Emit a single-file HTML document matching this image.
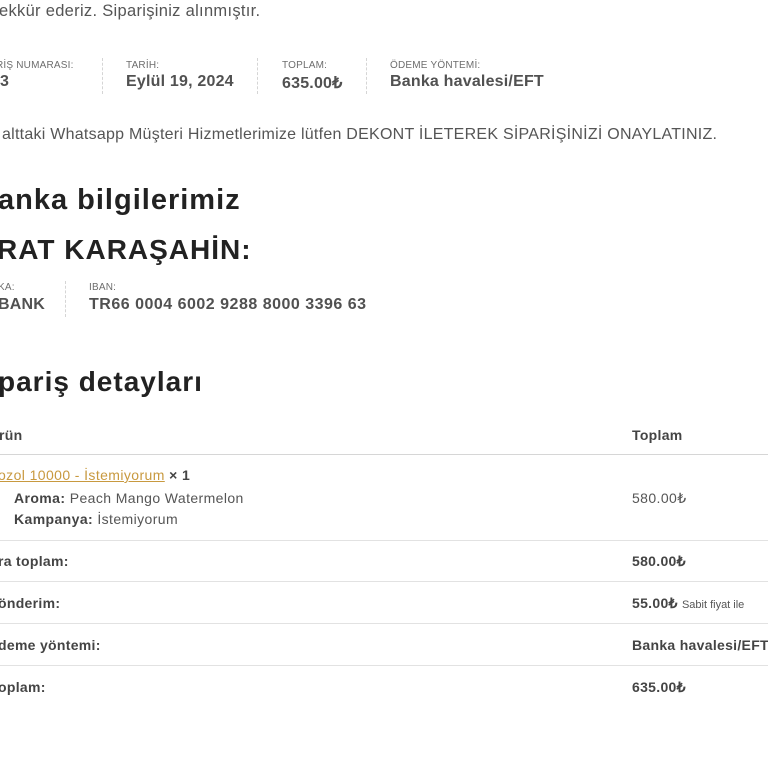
<!DOCTYPE html><html><head><meta charset="utf-8"><style>
body{margin:0;width:768px;height:768px;overflow:hidden;background:#fff;font-family:"Liberation Sans",sans-serif;color:#515151;position:relative}
div,span{position:absolute;white-space:nowrap}
.l{font-size:10px;text-transform:uppercase;color:#6d6d6d;letter-spacing:.2px}
.v{font-size:16px;font-weight:bold;color:#515151;letter-spacing:.2px}
.sep{width:0;border-left:1px dashed #d5d5d5}
.h{font-weight:bold;color:#222;letter-spacing:1px}
.hr{left:0;width:768px;height:1px;background:#e2e2e2}
.t{font-size:14px;font-weight:bold;color:#444;letter-spacing:.3px}
.n{font-size:14px;color:#555;letter-spacing:.4px}
</style></head><body>
<div style="left:-1px;top:2px;font-size:16.5px;color:#555;letter-spacing:.3px">ekkür ederiz. Siparişiniz alınmıştır.</div>
<div class="l" style="left:-4px;top:60px">RİŞ NUMARASI:</div>
<div class="v" style="left:0;top:73px">3</div>
<div class="sep" style="left:102px;top:58px;height:36px"></div>
<div class="l" style="left:126px;top:60px">TARİH:</div>
<div class="v" style="left:126px;top:73px">Eylül 19, 2024</div>
<div class="sep" style="left:257px;top:58px;height:36px"></div>
<div class="l" style="left:282px;top:60px">TOPLAM:</div>
<div class="v" style="left:282px;top:73px">635.00₺</div>
<div class="sep" style="left:366px;top:58px;height:36px"></div>
<div class="l" style="left:390px;top:60px">ÖDEME YÖNTEMİ:</div>
<div class="v" style="left:390px;top:73px">Banka havalesi/EFT</div>
<div style="left:2px;top:126px;font-size:16px;color:#555;letter-spacing:.25px">alttaki Whatsapp Müşteri Hizmetlerimize lütfen DEKONT İLETEREK SİPARİŞİNİZİ ONAYLATINIZ.</div>
<div class="h" style="left:-2px;top:184px;font-size:29px">anka bilgilerimiz</div>
<div class="h" style="left:-3px;top:234px;font-size:28px">RAT KARAŞAHİN:</div>
<div class="l" style="left:-2px;top:282px">KA:</div>
<div class="v" style="left:-2px;top:296px">BANK</div>
<div class="sep" style="left:65px;top:281px;height:36px"></div>
<div class="l" style="left:89px;top:282px">IBAN:</div>
<div class="v" style="left:89px;top:296px;letter-spacing:.5px">TR66 0004 6002 9288 8000 3396 63</div>
<div class="h" style="left:-2px;top:366px;font-size:28px">pariş detayları</div>
<div class="t" style="left:-1px;top:427px">rün</div>
<div class="t" style="left:632px;top:427px">Toplam</div>
<div class="hr" style="top:454px;background:#d6d6d6"></div>
<div class="n" style="left:-2px;top:467px"><span style="position:static;color:#c8993f;text-decoration:underline">ozol 10000 - İstemiyorum</span> <b style="color:#444">× 1</b></div>
<div class="n" style="left:14px;top:490px"><b style="color:#444">Aroma:</b> Peach Mango Watermelon</div>
<div class="n" style="left:14px;top:511px"><b style="color:#444">Kampanya:</b> İstemiyorum</div>
<div class="n" style="left:632px;top:490px">580.00₺</div>
<div class="hr" style="top:540px"></div>
<div class="t" style="left:-2px;top:553px">ra toplam:</div>
<div class="t" style="left:632px;top:553px">580.00₺</div>
<div class="hr" style="top:581px"></div>
<div class="t" style="left:-2px;top:595px">önderim:</div>
<div class="t" style="left:632px;top:595px">55.00₺ <span style="position:static;font-size:11px;font-weight:normal;color:#555;letter-spacing:0">Sabit fiyat ile</span></div>
<div class="hr" style="top:623px"></div>
<div class="t" style="left:-2px;top:637px">deme yöntemi:</div>
<div class="t" style="left:632px;top:637px">Banka havalesi/EFT</div>
<div class="hr" style="top:665px"></div>
<div class="t" style="left:-2px;top:679px">oplam:</div>
<div class="t" style="left:632px;top:679px">635.00₺</div>
</body></html>
